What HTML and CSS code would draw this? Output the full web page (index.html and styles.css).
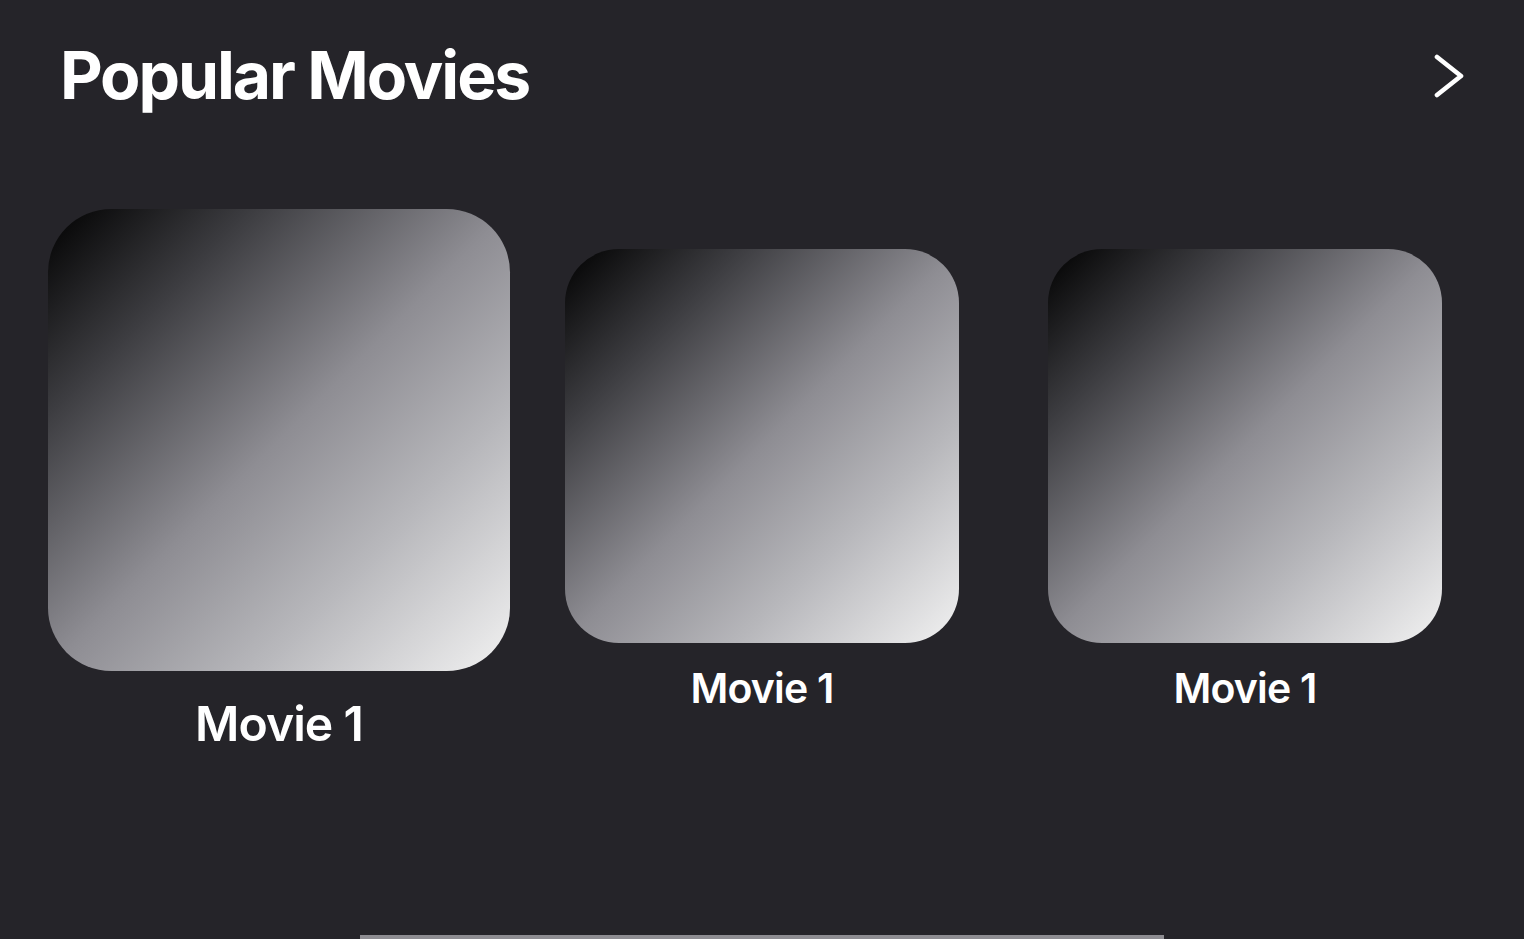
FILE: index.html
```html
<!DOCTYPE html>
<html lang="en">
<head>
<meta charset="utf-8">
<title>Popular Movies</title>
<link rel="stylesheet" href="styles.css">
</head>
<body>
<main class="screen">
  <header class="section-header">
    <h1 class="section-title">Popular Movies</h1>
    <button class="more-btn" aria-label="See all">
      <svg class="chevron" width="34" height="48" viewBox="0 0 34 48" aria-hidden="true">
        <polyline points="5,3 29,22 5,41" fill="none" stroke="#ffffff" stroke-width="4.6" stroke-linecap="round" stroke-linejoin="round"/>
      </svg>
    </button>
  </header>
  <section class="movie-row">
    <div class="movie-item is-focused">
      <div class="poster"></div>
      <div class="movie-title">Movie 1</div>
    </div>
    <div class="movie-item">
      <div class="poster"></div>
      <div class="movie-title">Movie 1</div>
    </div>
    <div class="movie-item">
      <div class="poster"></div>
      <div class="movie-title">Movie 1</div>
    </div>
  </section>
  <div class="scroll-indicator"></div>
</main>
</body>
</html>
```
FILE: styles.css
```css
html, body {
  margin: 0;
  padding: 0;
  background: #252429;
}
body {
  width: 1524px;
  height: 939px;
  overflow: hidden;
  font-family: Inter, "Noto Sans", "Liberation Sans", sans-serif;
  color: #ffffff;
}
.screen {
  display: flex;
  flex-direction: column;
  height: 939px;
}
.section-header {
  display: flex;
  align-items: flex-start;
  justify-content: space-between;
  padding: 35px 58px 0 60px;
  height: 80px;
}
.section-title {
  margin: 0;
  font-size: 66px;
  line-height: 80px;
  font-weight: 700;
  letter-spacing: -2.1px;
}
.more-btn {
  margin: 19px 0 0 0;
  padding: 0;
  border: 0;
  background: none;
  display: flex;
}
.movie-row {
  display: flex;
  gap: 89px;
  margin-top: 134px;
  padding-left: 82px;
}
.movie-item {
  width: 394px;
  display: flex;
  flex-direction: column;
  align-items: center;
}
.movie-item.is-focused {
  transform: scale(1.1726);
  transform-origin: 50% 232px;
}
.poster {
  width: 394px;
  height: 394px;
  border-radius: 54px;
  background: linear-gradient(to bottom right, #000000 0%, #3c3c40 22%, #8e8d93 50%, #b7b7bb 72%, #f2f2f2 100%);
}
.movie-title {
  margin-top: 20px;
  font-size: 41px;
  line-height: 50px;
  font-weight: 600;
  letter-spacing: -0.8px;
}
.scroll-indicator {
  margin-top: auto;
  margin-left: 360px;
  width: 804px;
  height: 4px;
  background: #8e8d92;
}
```
